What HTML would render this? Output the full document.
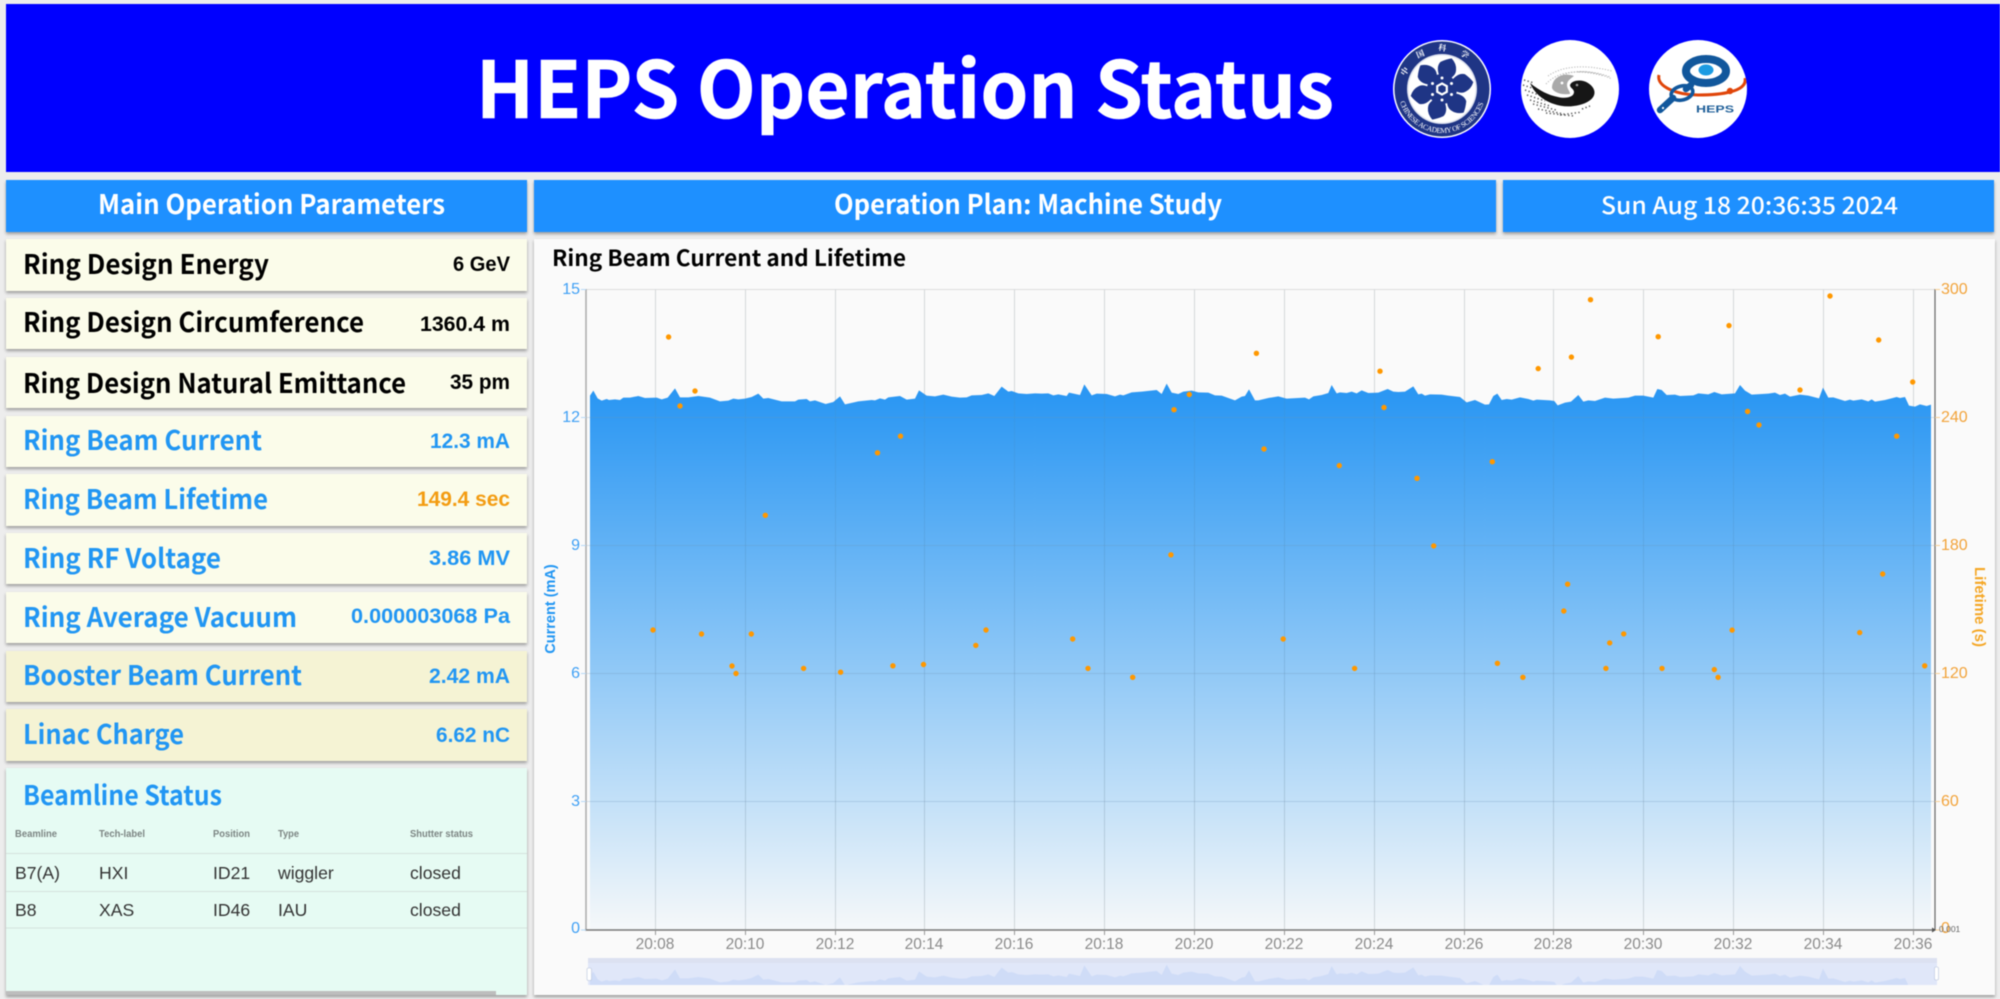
<!DOCTYPE html>
<html><head><meta charset="utf-8"><title>HEPS Operation Status</title>
<style>
html,body{margin:0;padding:0;width:2000px;height:999px;overflow:hidden;background:#ededed}
#r{position:relative;width:2000px;height:999px;overflow:hidden;filter:blur(.4px)}
.b{position:absolute;box-shadow:0 2px 3px rgba(0,0,0,.35)}
svg{position:absolute;left:0;top:0}
.y{font:700 27px "Noto Sans CJK SC","Liberation Sans",sans-serif}
.v{font:700 21px "Liberation Sans",sans-serif}
.h{font:700 27px "Noto Sans CJK SC","Liberation Sans",sans-serif;fill:#fff}
.t{font:15.5px "Liberation Sans",sans-serif;fill:#8a8a8a;text-anchor:middle}
.l{font:16px "Liberation Sans",sans-serif;fill:#3fa0f5;text-anchor:end}
.o{font:16px "Liberation Sans",sans-serif;fill:#f2a33a}
.th{font:700 10px "Liberation Sans",sans-serif;fill:#7c8583}
.td{font:17.6px "Liberation Sans",sans-serif;fill:#333}
</style></head><body><div id="r">
<div class="b" style="left:6px;top:4px;width:1994px;height:168px;background:#00f;box-shadow:none"></div>
<div class="b" style="left:6px;top:180px;width:521px;height:52px;background:#1e90ff"></div>
<div class="b" style="left:534px;top:180px;width:962px;height:52px;background:#1e90ff"></div>
<div class="b" style="left:1503px;top:180px;width:491px;height:52px;background:#1e90ff"></div>
<div class="b" style="left:6px;top:239px;width:521px;height:52px;background:#fbfcea"></div>
<div class="b" style="left:6px;top:298px;width:521px;height:51px;background:#fbfcea"></div>
<div class="b" style="left:6px;top:357px;width:521px;height:51px;background:#fbfcea"></div>
<div class="b" style="left:6px;top:416px;width:521px;height:51px;background:#fbfcea"></div>
<div class="b" style="left:6px;top:474px;width:521px;height:52px;background:#fbfcea"></div>
<div class="b" style="left:6px;top:533px;width:521px;height:51px;background:#fbfcea"></div>
<div class="b" style="left:6px;top:592px;width:521px;height:51px;background:#fbfcea"></div>
<div class="b" style="left:6px;top:651px;width:521px;height:51px;background:#f5f3d4"></div>
<div class="b" style="left:6px;top:709px;width:521px;height:52px;background:#f5f3d4"></div>
<div class="b" style="left:6px;top:768px;width:521px;height:227px;background:#e6fbf3"></div>
<div style="position:absolute;left:6px;top:991px;width:490px;height:4px;background:#bdbdbd"></div>
<div class="b" style="left:534px;top:239px;width:1461px;height:756px;background:#fafafa"></div>

<svg width="2000" height="999" viewBox="0 0 2000 999" xmlns="http://www.w3.org/2000/svg">
<defs>
<linearGradient id="g" gradientUnits="userSpaceOnUse" x1="0" y1="60" x2="0" y2="1665">
<stop offset="0" stop-color="#2b97f3"/><stop offset="1" stop-color="#2196f3" stop-opacity=".02"/>
</linearGradient>
<clipPath id="mc"><rect x="588" y="958" width="1349" height="27"/></clipPath>
<clipPath id="hc"><circle cx="0" cy="0" r="49"/></clipPath>
<path id="arcB" d="M-42 13A44 44 0 0 0 42 13"/>
<path id="arcT" d="M-36 -12A38 38 0 0 1 36 -12"/>
</defs>

<!-- header -->
<text x="476" y="118" textLength="858" lengthAdjust="spacingAndGlyphs" font-family="'Noto Sans CJK SC','Liberation Sans',sans-serif" font-weight="700" font-size="78" fill="#fff" stroke="#fff" stroke-width=".6">HEPS Operation Status</text>

<!-- CAS logo -->
<g transform="translate(1442 89)">
<circle r="49" fill="#fff"/><circle r="47.5" fill="#1f3585"/>
<circle r="35" fill="#dfe3f0"/><circle r="33.5" fill="#fff"/>
<g fill="#1f3585" transform="rotate(14)">
<path d="M0 -4L-7 -14Q-11 -21 -8 -26Q-3 -30 2 -32Q8 -28 9 -22Q10 -18 7 -14Z"/>
<path d="M0 -4L-7 -14Q-11 -21 -8 -26Q-3 -30 2 -32Q8 -28 9 -22Q10 -18 7 -14Z" transform="rotate(60)"/>
<path d="M0 -4L-7 -14Q-11 -21 -8 -26Q-3 -30 2 -32Q8 -28 9 -22Q10 -18 7 -14Z" transform="rotate(120)"/>
<path d="M0 -4L-7 -14Q-11 -21 -8 -26Q-3 -30 2 -32Q8 -28 9 -22Q10 -18 7 -14Z" transform="rotate(180)"/>
<path d="M0 -4L-7 -14Q-11 -21 -8 -26Q-3 -30 2 -32Q8 -28 9 -22Q10 -18 7 -14Z" transform="rotate(240)"/>
<path d="M0 -4L-7 -14Q-11 -21 -8 -26Q-3 -30 2 -32Q8 -28 9 -22Q10 -18 7 -14Z" transform="rotate(300)"/>
<circle r="15"/>
</g>
<polygon points="0,-5.5 4.8,-2.8 4.8,2.8 0,5.5 -4.8,2.8 -4.8,-2.8" fill="none" stroke="#fff" stroke-width="2.2"/>
<path d="M0 -11h.01M9.5 -5.5h.01M9.5 5.5h.01M0 11h.01M-9.5 5.5h.01M-9.5 -5.5h.01" stroke="#fff" stroke-width="3" stroke-linecap="round"/>
<text font-family="'Liberation Serif',serif" font-size="7.4" fill="#fff"><textPath href="#arcB" textLength="110" lengthAdjust="spacing">CHINESE ACADEMY OF SCIENCES</textPath></text>
<text font-family="'Noto Serif CJK SC',serif" font-weight="700" font-size="8" fill="#fff" letter-spacing="13.5"><textPath href="#arcT">中国科学院</textPath></text>
</g>

<!-- IHEP logo -->
<g transform="translate(1570 91)">
<circle r="49" cy="-2" fill="#fff"/>
<path d="M-22 -15C-8 -25 14 -27 42 -20M-14 -12C0 -22 20 -22 42 -12M-24 -7C-12 -20 8 -22 34 -15M8 -19C18 -20 30 -18 40 -14" fill="none" stroke="#b5b5b5" stroke-width="1" stroke-dasharray="1.2 1.6"/>
<path d="M-46 -11L-36 -8M-47 -6L-32 -1M-45 -1L-28 5M-43 4L-25 10M-40 9L-20 15M-37 13L-14 19M-32 18L-6 23M-24 22L4 25M-10 24L12 21M12 18L20 15" fill="none" stroke="#555" stroke-width="1.5" stroke-dasharray="1.3 2.4"/>
<path d="M-18 -3C-18 -14 -6 -19 4 -15C0 -12 -3 -10 -3 -6C-3 -2 0 0 0 3C-8 4 -16 2 -18 -3Z" fill="#a9a9a9"/>
<circle cx="-8" cy="-8" r="1.4" fill="#fff"/>
<path d="M-40 -8C-30 0 -22 4 -12 6C-4 8 4 6 4 1C4 -2 0 -3 0 -6C2 -11 12 -12 18 -8C26 -3 27 5 19 10C10 16 -6 17 -16 13C-26 10 -36 2 -40 -8Z" fill="#161616"/>
<circle cx="7" cy="-6" r="1.3" fill="#999"/>
</g>

<!-- HEPS logo -->
<g transform="translate(1698 89)">
<circle r="49" fill="#fff"/>
<g clip-path="url(#hc)">
<path d="M-39 -14C-42 -2 -20 6 0 6C22 6 50 3 47 -11" fill="none" stroke="#e0450a" stroke-width="3"/>
<circle cx="32" cy="2" r="3.2" fill="#e0450a"/>
<path d="M-7 -4L-12 0M-25 9L-38 21" stroke="#11579c" stroke-width="6.5" stroke-linecap="round"/>
<ellipse cx="-16" cy="4" rx="11" ry="7" fill="none" stroke="#11579c" stroke-width="3.6" transform="rotate(-14 -16 4)"/>
<ellipse cx="8" cy="-18" rx="20" ry="12" fill="none" stroke="#11579c" stroke-width="8"/>
<ellipse cx="8" cy="-19" rx="7.5" ry="5.5" fill="#1b9be2"/>
<circle cx="-35" cy="19" r="1.1" fill="#fff"/>
<text x="-2" y="23.5" textLength="38" lengthAdjust="spacingAndGlyphs" font-family="'Liberation Sans',sans-serif" font-weight="700" font-size="10.5" fill="#1f5f99">HEPS</text>
</g>
</g>

<!-- bars -->
<text class="h" x="98" y="214" textLength="347" lengthAdjust="spacingAndGlyphs">Main Operation Parameters</text>
<text class="h" x="834" y="214" textLength="388" lengthAdjust="spacingAndGlyphs">Operation Plan: Machine Study</text>
<text x="1601" y="214" textLength="297" lengthAdjust="spacingAndGlyphs" font-family="'Noto Sans CJK SC','Liberation Sans',sans-serif" font-weight="500" font-size="24" fill="#fff">Sun Aug 18 20:36:35 2024</text>

<!-- rows -->
<text class="y" x="23" y="274" textLength="246" lengthAdjust="spacingAndGlyphs" fill="#000">Ring Design Energy</text>
<text class="v" x="453" y="271" textLength="57" lengthAdjust="spacingAndGlyphs" fill="#000">6 GeV</text>
<text class="y" x="23" y="332" textLength="341" lengthAdjust="spacingAndGlyphs" fill="#000">Ring Design Circumference</text>
<text class="v" x="420" y="331" textLength="90" lengthAdjust="spacingAndGlyphs" fill="#000">1360.4 m</text>
<text class="y" x="23" y="393" textLength="383" lengthAdjust="spacingAndGlyphs" fill="#000">Ring Design Natural Emittance</text>
<text class="v" x="450" y="389" textLength="60" lengthAdjust="spacingAndGlyphs" fill="#000">35 pm</text>
<text class="y" x="23" y="450" textLength="239" lengthAdjust="spacingAndGlyphs" fill="#2196f3">Ring Beam Current</text>
<text class="v" x="430" y="448" textLength="80" lengthAdjust="spacingAndGlyphs" fill="#2196f3">12.3 mA</text>
<text class="y" x="23" y="509" textLength="245" lengthAdjust="spacingAndGlyphs" fill="#2196f3">Ring Beam Lifetime</text>
<text class="v" x="417" y="506" textLength="93" lengthAdjust="spacingAndGlyphs" fill="#f39c12">149.4 sec</text>
<text class="y" x="23" y="568" textLength="198" lengthAdjust="spacingAndGlyphs" fill="#2196f3">Ring RF Voltage</text>
<text class="v" x="429" y="565" textLength="81" lengthAdjust="spacingAndGlyphs" fill="#2196f3">3.86 MV</text>
<text class="y" x="23" y="627" textLength="274" lengthAdjust="spacingAndGlyphs" fill="#2196f3">Ring Average Vacuum</text>
<text class="v" x="351" y="623" textLength="159" lengthAdjust="spacingAndGlyphs" fill="#2196f3">0.000003068 Pa</text>
<text class="y" x="23" y="685" textLength="279" lengthAdjust="spacingAndGlyphs" fill="#2196f3">Booster Beam Current</text>
<text class="v" x="429" y="683" textLength="81" lengthAdjust="spacingAndGlyphs" fill="#2196f3">2.42 mA</text>
<text class="y" x="23" y="744" textLength="161" lengthAdjust="spacingAndGlyphs" fill="#2196f3">Linac Charge</text>
<text class="v" x="436" y="742" textLength="74" lengthAdjust="spacingAndGlyphs" fill="#2196f3">6.62 nC</text>

<!-- beamline -->
<text class="y" x="23" y="805" textLength="199" lengthAdjust="spacingAndGlyphs" fill="#2196f3">Beamline Status</text>
<text class="th" x="15" y="837" textLength="42" lengthAdjust="spacingAndGlyphs">Beamline</text>
<text class="th" x="99" y="837" textLength="46" lengthAdjust="spacingAndGlyphs">Tech-label</text>
<text class="th" x="213" y="837" textLength="37" lengthAdjust="spacingAndGlyphs">Position</text>
<text class="th" x="278" y="837" textLength="21" lengthAdjust="spacingAndGlyphs">Type</text>
<text class="th" x="410" y="837" textLength="63" lengthAdjust="spacingAndGlyphs">Shutter status</text>
<path d="M6 853.5H527M6 891.5H527M6 928H527" stroke="#d5e2dd" stroke-width="1"/>
<text class="td" x="15" y="879">B7(A)</text><text class="td" x="99" y="879">HXI</text><text class="td" x="213" y="879">ID21</text><text class="td" x="278" y="879">wiggler</text><text class="td" x="410" y="879">closed</text>
<text class="td" x="15" y="916">B8</text><text class="td" x="99" y="916">XAS</text><text class="td" x="213" y="916">ID46</text><text class="td" x="278" y="916">IAU</text><text class="td" x="410" y="916">closed</text>

<!-- chart -->
<text x="552" y="266" textLength="354" lengthAdjust="spacingAndGlyphs" font-family="'Noto Sans CJK SC','Liberation Sans',sans-serif" font-weight="700" font-size="22" fill="#000">Ring Beam Current and Lifetime</text>

<path d="M586 289.5H1935" stroke="#ddd"/>
<path d="M655.5 289V930M745.5 289V930M835.5 289V930M924.5 289V930M1014.5 289V930M1104.5 289V930M1194.5 289V930M1284.5 289V930M1374.5 289V930M1464.5 289V930M1553.5 289V930M1643.5 289V930M1733.5 289V930M1823.5 289V930M1913.5 289V930" stroke="#e2e2e2"/>
<g fill="url(#g)">
<polygon transform="translate(585 375) scale(.33333)" points="15,1665 15,62 25,47 38,70 50,77 65,72 72,75 90,73 105,75 115,68 135,68 160,63 180,69 215,68 230,73 248,68 270,40 285,67 310,67 340,63 375,68 405,79 430,77 445,71 460,73 480,71 500,66 520,56 535,71 550,69 590,79 630,79 640,74 665,72 675,79 690,76 722,87 745,81 765,64 780,88 820,79 860,75 870,76 885,70 900,74 910,67 945,63 965,74 990,71 1002,46 1025,62 1050,64 1075,59 1100,65 1125,68 1145,67 1160,61 1190,60 1210,55 1228,63 1250,35 1270,50 1280,48 1300,55 1325,57 1350,55 1350,1665"/>
<polygon transform="translate(1035 375) scale(.33333)" points="0,1665 0,55 20,56 40,55 55,61 70,58 95,63 102,53 135,60 148,28 170,61 185,56 215,57 240,64 255,59 265,61 290,52 320,50 365,45 380,57 395,26 410,53 430,57 445,50 470,47 490,52 520,53 540,61 560,62 600,76 620,65 630,63 642,43 660,76 670,76 700,69 730,64 755,71 810,68 822,73 835,64 860,60 880,54 890,30 905,55 915,52 935,54 950,50 965,55 980,46 1000,54 1030,53 1058,42 1075,50 1090,51 1110,50 1135,34 1150,58 1160,56 1170,62 1185,58 1220,59 1240,62 1275,66 1295,82 1320,75 1350,89 1350,1665"/>
<polygon transform="translate(1485 375) scale(.33333)" points="0,1665 0,89 12,88 25,63 37,56 50,75 65,72 80,74 105,67 130,72 145,77 155,74 195,76 208,78 218,91 240,83 258,80 280,60 295,80 310,76 330,78 360,68 385,71 430,68 450,62 475,62 505,68 517,42 530,45 545,60 570,59 585,63 625,61 640,55 670,58 688,51 710,58 750,55 765,30 780,47 800,59 850,56 870,53 885,60 900,56 915,65 945,59 970,62 1002,70 1014,38 1030,68 1045,67 1080,78 1095,74 1105,77 1130,73 1150,79 1160,73 1170,80 1200,75 1235,66 1245,69 1260,66 1272,92 1290,95 1305,88 1325,93 1338,89 1338,1665"/>
</g>
<path d="M586 417.5H1935M586 545.5H1935M586 673.5H1935M586 801.5H1935" stroke="#6b93b5" stroke-opacity=".28"/>
<path d="M655.5 289V930M745.5 289V930M835.5 289V930M924.5 289V930M1014.5 289V930M1104.5 289V930M1194.5 289V930M1284.5 289V930M1374.5 289V930M1464.5 289V930M1553.5 289V930M1643.5 289V930M1733.5 289V930M1823.5 289V930M1913.5 289V930" stroke="#607d8b" stroke-opacity=".1"/>
<path d="M586 289V930" stroke="#aaa" stroke-width="1.5"/>
<path d="M585 930H1935" stroke="#777" stroke-width="1.5"/>
<path d="M1935 289V930" stroke="#666" stroke-width="1.2"/>
<path d="M581 289.5H586M581 417.5H586M581 545.5H586M581 673.5H586M581 801.5H586M581 930H586" stroke="#b6d9f7"/>
<path d="M1935 289.5H1940M1935 417.5H1940M1935 545.5H1940M1935 673.5H1940M1935 801.5H1940M1935 930H1940" stroke="#f8cf94"/>
<path d="M655.5 930V935M745.5 930V935M835.5 930V935M924.5 930V935M1014.5 930V935M1104.5 930V935M1194.5 930V935M1284.5 930V935M1374.5 930V935M1464.5 930V935M1553.5 930V935M1643.5 930V935M1733.5 930V935M1823.5 930V935M1913.5 930V935" stroke="#999"/>
<path d="M1932 927.5L1936 930L1932 932.5Z" fill="#555"/>

<path fill="none" stroke="#ff9800" stroke-width="5.4" stroke-linecap="round" d="M653 630h.01M668.6 337h.01M680 406h.01M695 391h.01M701.5 634h.01M732 666h.01M736 673.5h.01M751.3 634h.01M765.3 515.3h.01M803.6 668.4h.01M840.6 672.2h.01M877.5 452.8h.01M892.9 665.8h.01M900.5 436.2h.01M923.5 664.5h.01M975.8 645.4h.01M986 630h.01M1072.7 639h.01M1088 668.4h.01M1132.7 677.3h.01M1170.9 554.8h.01M1174 409.7h.01M1189.3 394.5h.01M1256.4 353.3h.01M1264 449h.01M1283.2 639h.01M1339.3 465.6h.01M1354.6 668.4h.01M1380 371.2h.01M1384 407.5h.01M1417 478.3h.01M1433.7 545.9h.01M1492.3 461.7h.01M1497.4 663.3h.01M1522.9 677.3h.01M1538.2 368.6h.01M1563.8 611h.01M1567.6 584.2h.01M1571.4 357.1h.01M1590.5 299.7h.01M1605.9 668.4h.01M1609.7 642.9h.01M1623.7 633.9h.01M1658.2 336.7h.01M1662 668.4h.01M1714.3 669.6h.01M1718.1 677.3h.01M1729 325.6h.01M1732.1 630.1h.01M1747.6 411.5h.01M1759 425h.01M1800 390h.01M1830 296h.01M1859.7 632.6h.01M1878.7 340h.01M1882.7 574h.01M1896.7 436.2h.01M1912.7 382h.01M1924.7 665.8h.01"/>

<text class="l" x="580" y="294">15</text><text class="l" x="580" y="422">12</text><text class="l" x="580" y="550">9</text><text class="l" x="580" y="678">6</text><text class="l" x="580" y="806">3</text><text class="l" x="580" y="933">0</text>
<text class="o" x="1941" y="294">300</text><text class="o" x="1941" y="422">240</text><text class="o" x="1941" y="550">180</text><text class="o" x="1941" y="678">120</text><text class="o" x="1941" y="806">60</text><text class="o" x="1941" y="933">0</text>
<text x="1939" y="932" font-family="'Liberation Sans',sans-serif" font-size="8.5" fill="#666">0.001</text>

<text class="t" x="655" y="949">20:08</text><text class="t" x="745" y="949">20:10</text><text class="t" x="835" y="949">20:12</text><text class="t" x="924" y="949">20:14</text><text class="t" x="1014" y="949">20:16</text><text class="t" x="1104" y="949">20:18</text><text class="t" x="1194" y="949">20:20</text><text class="t" x="1284" y="949">20:22</text><text class="t" x="1374" y="949">20:24</text><text class="t" x="1464" y="949">20:26</text><text class="t" x="1553" y="949">20:28</text><text class="t" x="1643" y="949">20:30</text><text class="t" x="1733" y="949">20:32</text><text class="t" x="1823" y="949">20:34</text><text class="t" x="1913" y="949">20:36</text>

<text transform="translate(555 609) rotate(-90)" text-anchor="middle" font-family="'Liberation Sans',sans-serif" font-weight="700" font-size="14.5" fill="#2196f3">Current (mA)</text>
<text transform="translate(1975 607) rotate(90)" text-anchor="middle" font-family="'Liberation Sans',sans-serif" font-weight="700" font-size="15" fill="#f5a623">Lifetime (s)</text>

<!-- data zoom -->
<rect x="588" y="958" width="1349" height="27" fill="#e0e7f9"/>
<rect x="588" y="958" width="1349" height="5" fill="#dce1f1"/>
<g clip-path="url(#mc)" fill="#cfdcf7">
<polygon transform="translate(585 956) scale(.33333)" points="15,100 15,62 25,47 38,70 50,77 65,72 72,75 90,73 105,75 115,68 135,68 160,63 180,69 215,68 230,73 248,68 270,40 285,67 310,67 340,63 375,68 405,79 430,77 445,71 460,73 480,71 500,66 520,56 535,71 550,69 590,79 630,79 640,74 665,72 675,79 690,76 722,87 745,81 765,64 780,88 820,79 860,75 870,76 885,70 900,74 910,67 945,63 965,74 990,71 1002,46 1025,62 1050,64 1075,59 1100,65 1125,68 1145,67 1160,61 1190,60 1210,55 1228,63 1250,35 1270,50 1280,48 1300,55 1325,57 1350,55 1350,100"/>
<polygon transform="translate(1035 956) scale(.33333)" points="0,100 0,55 20,56 40,55 55,61 70,58 95,63 102,53 135,60 148,28 170,61 185,56 215,57 240,64 255,59 265,61 290,52 320,50 365,45 380,57 395,26 410,53 430,57 445,50 470,47 490,52 520,53 540,61 560,62 600,76 620,65 630,63 642,43 660,76 670,76 700,69 730,64 755,71 810,68 822,73 835,64 860,60 880,54 890,30 905,55 915,52 935,54 950,50 965,55 980,46 1000,54 1030,53 1058,42 1075,50 1090,51 1110,50 1135,34 1150,58 1160,56 1170,62 1185,58 1220,59 1240,62 1275,66 1295,82 1320,75 1350,89 1350,100"/>
<polygon transform="translate(1485 956) scale(.33333)" points="0,100 0,89 12,88 25,63 37,56 50,75 65,72 80,74 105,67 130,72 145,77 155,74 195,76 208,78 218,91 240,83 258,80 280,60 295,80 310,76 330,78 360,68 385,71 430,68 450,62 475,62 505,68 517,42 530,45 545,60 570,59 585,63 625,61 640,55 670,58 688,51 710,58 750,55 765,30 780,47 800,59 850,56 870,53 885,60 900,56 915,65 945,59 970,62 1002,70 1014,38 1030,68 1045,67 1080,78 1095,74 1105,77 1130,73 1150,79 1160,73 1170,80 1200,75 1235,66 1245,69 1260,66 1272,92 1290,95 1305,88 1325,93 1338,89 1350,89 1350,100"/>
</g>
<rect x="587" y="968" width="4.5" height="12.5" rx="1.5" fill="#fff" stroke="#b8c4dc" stroke-width=".6"/>
<rect x="1934.5" y="967" width="4" height="13" rx="1.5" fill="#fff" stroke="#b8c4dc" stroke-width=".6"/>
</svg>
</div></body></html>
